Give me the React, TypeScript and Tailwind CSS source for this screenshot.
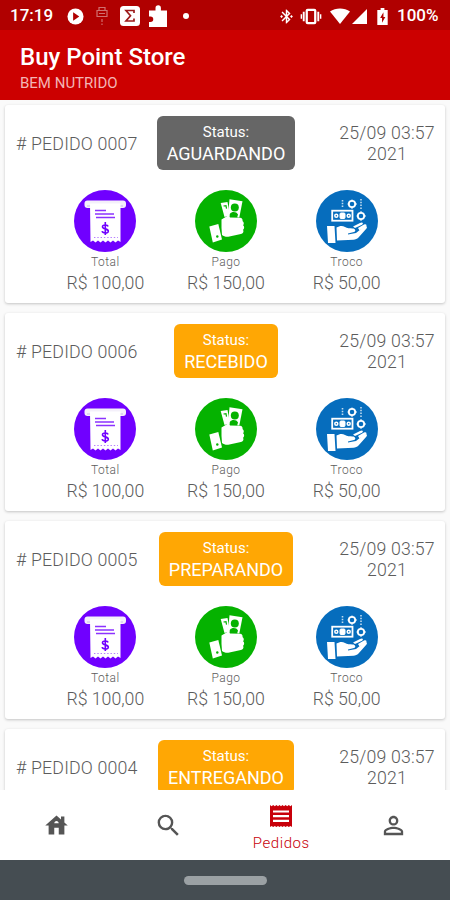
import React from 'react';
import { MdBluetoothConnected, MdHouse, MdPersonOutline, MdSearch } from 'react-icons/md';

interface Order {
    id: string;
    status: string;
    color: string;
    expanded: boolean;
}

const orders: Order[] = [
    { id: '0007', status: 'AGUARDANDO', color: 'bg-[#666666]', expanded: true },
    { id: '0006', status: 'RECEBIDO', color: 'bg-[#ffa704]', expanded: true },
    { id: '0005', status: 'PREPARANDO', color: 'bg-[#ffa704]', expanded: true },
    { id: '0004', status: 'ENTREGANDO', color: 'bg-[#ffa704]', expanded: false },
];

const ReceiptArt = () => (
    <svg viewBox="0 0 62 62" className="size-[62px]">
        <circle cx="31" cy="31" r="31" fill="#7000ff" />
        <rect x="10.5" y="10.5" width="41.500" height="7.500" rx="3" fill="#f4f0fa" />
        <path d="M13 16h36" stroke="#d9cdee" strokeWidth="1.500" />
        <path d="M16 13.500h30.500v38.500l-2.500-1.500-2.500 2-2.500-2-2.500 2-2.500-2-2.500 2-2.500-2-2.500 2-2.500-2-2.500 2-2.500-2-2.500 1.500z" fill="#fff" />
        <path d="M21 20.500h11M21 24h19M22 27.500h19" stroke="#7000ff" strokeWidth="1.700" opacity=".8" />
        <path d="M34 36.500c-.3-1.800-5.500-2.300-5.500.2 0 2.800 5.800 1.500 5.800 4.500 0 2.700-5.800 2.300-6.200 0M31.300 32v13" fill="none" stroke="#7000ff" strokeWidth="1.600" />
        <path d="M20 47.500h24" stroke="#7000ff" strokeWidth="1.100" strokeDasharray="1.400 1.900" opacity=".5" />
    </svg>
);

const CashHandArt = () => (
    <svg viewBox="0 0 62 62" className="size-[62px]">
        <circle cx="31" cy="31" r="31" fill="#05b200" />
        <path d="M25.700 13l6.800-1 2.500 13.500-5.500 1.500z" fill="#fff" />
        <path d="M28.500 16l2.500-.4.500 3" fill="none" stroke="#05b200" strokeWidth="1.200" />
        <path d="M34.500 9.300l13 2-3.200 16.200-11.300-1z" fill="#fff" />
        <circle cx="39.800" cy="17.500" r="4" fill="#05b200" />
        <path d="M34.800 24c2-2.800 6.700-2.500 8.200.5l-1 3.500h-7.500z" fill="#05b200" />
        <path d="M26.500 29.500l5-3c1.500-.8 3-.3 3.500 1l10 .2c2 .1 3 1.800 2.500 3.400 1.500 1 1.700 3 .6 4.200 1.500 1.300 1.300 3.500 0 4.500 1 2.200-.2 4-2.200 4.300l-11.500 2.500c-3.400.6-5.500-.2-7.400-1.600l-.5-7z" fill="#fff" />
        <path d="M14.300 36.500l9-2.500 3.700 15.500-9.200 3z" fill="#fff" />
        <circle cx="22.300" cy="46.500" r="1.200" fill="#05b200" />
    </svg>
);

const ChangeHandArt = () => (
    <svg viewBox="0 0 62 62" className="size-[62px]">
        <circle cx="31" cy="31" r="31" fill="#066dbd" />
        <g fill="none" stroke="#fff">
            <circle cx="36" cy="14" r="3.200" strokeWidth="1.800" />
            <circle cx="45" cy="26" r="3.200" strokeWidth="1.800" />
            <path d="M36 9.500v2M36 17v2M31.500 14h2M39 14h2M45 21v2M45 29v2M40.500 26h2M48 26h2" strokeWidth="1" />
            <path d="M26.500 10v8M45 9v11" strokeWidth="1.600" strokeDasharray="1.500 1.300" opacity=".75" />
            <rect x="16.200" y="20.700" width="20.300" height="10" strokeWidth="1.800" />
            <rect x="24" y="23" width="5" height="5.500" rx="1" fill="#fff" strokeWidth="1" />
            <circle cx="20.300" cy="25.700" r="1.500" strokeWidth="1.500" />
            <circle cx="32.700" cy="25.700" r="1.500" strokeWidth="1.500" />
        </g>
        <path d="M11 36h7.500l1 17h-7.500zM20.500 37.500c3-1.800 6-2.200 8.500-.5 2 1.300 4.800 1.400 7.500 1.400 3 0 3.800 2.600 1.500 3.600l-6 1.500v1l8-1.500 8.200-6.500c2-1.500 3.600 0 2.300 2l-8 9c-1.500 1.500-3 2-5 2.200l-16.500.8z" fill="#fff" />
        <path d="M37 36.500l7-3.500c2.500-1.300 4 0 2 1.800l-7 3.200zM42 38l6-3.500c2-1 3.500.5 1.800 2l-6.300 4z" fill="#fff" />
    </svg>
);

interface AmountProps {
    label: string;
    value: string;
    children: React.ReactNode;
}

const Amount: React.FC<AmountProps> = ({ label, value, children }) => (
    <div className="flex flex-col items-center">
        {children}
        <span className="mt-[2px] text-[12px] leading-[16px] tracking-[0.500px]">{label}</span>
        <span className="text-[17.700px] leading-[26px] whitespace-nowrap">{value}</span>
    </div>
);

const OrderCard: React.FC<{ order: Order }> = ({ order }) => (
    <article className="h-[198px] shrink-0 rounded-[3px] bg-white pt-[11px] font-light text-[#5c5c5c] shadow-[0_1px_3px_rgba(0,0,0,0.22)]">
        <div className="grid grid-cols-[1fr_auto_1fr] items-center pr-[9px] pl-[11px]">
            <span className="pt-[2px] text-[17.800px] tracking-[0.150px] whitespace-nowrap"># PEDIDO {order.id}</span>
            <div className={`flex h-[54px] flex-col items-center rounded-[6px] px-[10px] pt-[6px] font-normal text-white ${order.color}`}>
                <span className="text-[15px] leading-[20px]">Status:</span>
                <span className="text-[18px] leading-[24px]">{order.status}</span>
            </div>
            <div className="w-[98px] justify-self-end pt-[2px] text-center text-[17.700px] leading-[21px] tracking-[0.2px] whitespace-nowrap">
                25/09 03:57
                <br />
                2021
            </div>
        </div>
        {order.expanded && (
            <div className="mt-5 grid grid-cols-3 pr-[38px] pl-[40px]">
                <Amount label="Total" value="R$ 100,00"><ReceiptArt /></Amount>
                <Amount label="Pago" value="R$ 150,00"><CashHandArt /></Amount>
                <Amount label="Troco" value="R$ 50,00"><ChangeHandArt /></Amount>
            </div>
        )}
    </article>
);

const StatusBar = () => (
    <div className="flex h-[30px] shrink-0 items-center bg-[#b00000] px-[10px] pt-[2px] text-[17px] font-medium text-white">
        <span className="w-[46px]">17:19</span>
        <svg viewBox="0 0 18 18" className="ml-[11px] size-[17px]">
            <circle cx="9" cy="9" r="8.500" fill="#fff" />
            <path d="M6.500 4.500l6.500 4.500-6.500 4.500z" fill="#b00000" />
        </svg>
        <svg viewBox="0 0 12 20" className="ml-[12px] h-5 w-3" fill="none" stroke="#d07070" strokeWidth="1.200">
            <path d="M3 4V1.500h6V4M1 4.500h10v6H1zM3 7.500h6M6 13v3M6 17.500v1.500" />
        </svg>
        <svg viewBox="0 0 20 20" className="ml-[12px] size-5">
            <rect width="20" height="20" rx="3.500" fill="#fff" />
            <path d="M14 7V4.500H6l4.500 5.300L6 15h8v-2.500" fill="none" stroke="#9c1a1a" strokeWidth="1.700" />
        </svg>
        <svg viewBox="0 0 18 22" className="ml-[9px] h-[22px] w-[18px]" fill="#fff">
            <path d="M0 5.500h6.500V3a2.700 2.700 0 0 1 5.400 0v2.500H18V22H0v-5h1.500a2.700 2.700 0 0 0 0-5.500H0z" />
        </svg>
        <span className="ml-[16px] size-[6px] rounded-full bg-white" />
        <MdBluetoothConnected className="ml-auto size-[17px]" />
        <svg viewBox="0 0 22 18" className="ml-[5px] h-[17px] w-[22px]" fill="none" stroke="#fff">
            <rect x="6.500" y="2" width="9" height="14" rx="1" strokeWidth="2.400" />
            <path d="M3.300 4v10M18.700 4v10" strokeWidth="2" />
            <path d="M.8 6.500v5M21.200 6.500v5" strokeWidth="1.500" />
        </svg>
        <svg viewBox="0 0 20 16" className="ml-[8px] h-4 w-5" fill="#fff">
            <path d="M0 3.500C5.500-.5 14.500-.5 20 3.500L10 16z" />
        </svg>
        <svg viewBox="0 0 15 15" className="ml-[2px] size-[15px]" fill="#fff">
            <path d="M15 0v15H0z" />
        </svg>
        <svg viewBox="0 0 11 18" className="ml-[10px] h-[17px] w-[11px]">
            <path d="M3.500 0h4v2H11v16H0V2h3.500z" fill="#fff" />
            <path d="M6.500 4.500L3 10.500h2v5l3.500-6H6.500z" fill="#b00000" />
        </svg>
        <span className="ml-[9px] w-[43px] whitespace-nowrap">100%</span>
    </div>
);

const BottomNav = () => (
    <nav className="grid h-[70px] shrink-0 grid-cols-4 items-center justify-items-center bg-white text-[#555555]">
        <MdHouse className="size-[27px]" />
        <MdSearch className="size-[29px]" />
        <div className="flex flex-col items-center pt-[4px] text-[#c8000a]">
            <svg viewBox="0 0 22 24" className="my-[1px] h-6 w-[22px]">
                <path d="M0 1l1.600 1.200L3.200 1l1.600 1.200L6.400 1 8 2.200 9.500 1 11 2.200 12.500 1 14 2.200 15.600 1l1.600 1.200L18.800 1l1.600 1.200L22 1v22l-1.600-1-1.600 1-1.600-1-1.600 1-1.600-1-1.500 1-1.500-1-1.500 1L8 22l-1.600 1-1.600-1-1.600 1-1.600-1L0 23z" fill="currentColor" />
                <path d="M3 7.500h16M3 12.200h16M3 16.900h16" stroke="#fff" strokeWidth="2.200" />
            </svg>
            <span className="mt-[5px] text-[15px] leading-[18px] font-light tracking-[0.600px]">Pedidos</span>
        </div>
        <MdPersonOutline className="size-[29px]" />
    </nav>
);

export default function App() {
    return (
        <div className="flex h-[900px] w-[450px] flex-col overflow-hidden bg-[#fafafa] font-['Roboto',sans-serif]">
            <StatusBar />
            <header className="h-[70px] shrink-0 bg-[#cc0000] pt-[13px] pl-[20px]">
                <h1 className="text-[24px] leading-[28px] font-medium text-white">Buy Point Store</h1>
                <p className="text-[15px] leading-[24px] text-[#f3b5b5]">BEM NUTRIDO</p>
            </header>
            <main className="flex min-h-0 flex-1 flex-col gap-[10px] overflow-hidden px-[5px] pt-[5px]">
                {orders.map((order) => (
                    <OrderCard key={order.id} order={order} />
                ))}
            </main>
            <BottomNav />
            <div className="flex h-10 shrink-0 items-center justify-center bg-[#454d52]">
                <div className="h-[9px] w-[83px] rounded-full bg-[#9ba1a4]" />
            </div>
        </div>
    );
}
